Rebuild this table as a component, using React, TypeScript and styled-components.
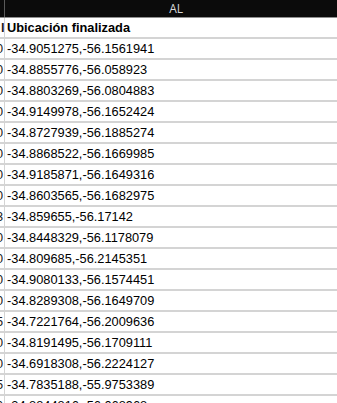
import React from "react";
import styled, { createGlobalStyle } from "styled-components";

const Global = createGlobalStyle`
  html, body { margin: 0; padding: 0; background: #ffffff; overflow: hidden; }
  body { font-family: "Liberation Sans", Arial, sans-serif; }
`;

const Sheet = styled.div`
  width: 337px;
  height: 403px;
  overflow: hidden;
  display: flex;
  flex-direction: column;
  background: #ffffff;
`;

const HeaderBar = styled.div`
  display: flex;
  flex: none;
  height: 17px;
  background: #0b0b0b;
  border-bottom: 1px solid #8f8f8f;
`;

const HeaderStub = styled.div`
  width: 4px;
  flex: none;
  border-right: 1px solid #5a5a5a;
`;

const HeaderLabel = styled.div`
  width: 342px;
  flex: none;
  display: flex;
  align-items: center;
  justify-content: center;
  color: #d8d8d8;
  font-family: "Open Sans", "Liberation Sans", sans-serif;
  font-size: 12px;
  letter-spacing: -0.3px;
  line-height: 17px;
`;

const Row = styled.div`
  display: flex;
  flex: none;
  height: 19px;
  border-bottom: 2px solid #d4d4d4;
`;

const StubCell = styled.div<{ $bold?: boolean }>`
  width: 5px;
  flex: none;
  overflow: hidden;
  white-space: nowrap;
  border-right: 1px solid #d4d4d4;
  display: flex;
  align-items: flex-end;
  padding-bottom: 2px;
  box-sizing: border-box;
  font-size: 12.8px;
  line-height: 15px;
  color: #1a1a1a;
  font-weight: ${(p) => (p.$bold ? 700 : 400)};
  text-indent: ${(p) => (p.$bold ? "1px" : "-4px")};
`;

const Cell = styled.div<{ $bold?: boolean }>`
  flex: none;
  width: 340px;
  padding-left: 2px;
  display: flex;
  align-items: flex-end;
  padding-bottom: 2px;
  box-sizing: border-box;
  white-space: nowrap;
  overflow: hidden;
  font-size: 12.8px;
  line-height: 15px;
  color: #000000;
  font-weight: ${(p) => (p.$bold ? 700 : 400)};
`;

const values = [
  "-34.9051275,-56.1561941",
  "-34.8855776,-56.058923",
  "-34.8803269,-56.0804883",
  "-34.9149978,-56.1652424",
  "-34.8727939,-56.1885274",
  "-34.8868522,-56.1669985",
  "-34.9185871,-56.1649316",
  "-34.8603565,-56.1682975",
  "-34.859655,-56.17142",
  "-34.8448329,-56.1178079",
  "-34.809685,-56.2145351",
  "-34.9080133,-56.1574451",
  "-34.8289308,-56.1649709",
  "-34.7221764,-56.2009636",
  "-34.8191495,-56.1709111",
  "-34.6918308,-56.2224127",
  "-34.7835188,-55.9753389",
  "-34.8844816,-56.068968",
];

const stubs = ["0", "0", "0", "0", "0", "0", "0", "0", "3", "0", "0", "0", "0", "5", "0", "0", "5", "0"];

export default function App() {
  return (
    <>
      <Global />
      <Sheet>
        <HeaderBar>
          <HeaderStub />
          <HeaderLabel>AL</HeaderLabel>
        </HeaderBar>
        <Row>
          <StubCell $bold>l</StubCell>
          <Cell $bold>Ubicación finalizada</Cell>
        </Row>
        {values.map((v, i) => (
          <Row key={i}>
            <StubCell>{stubs[i]}</StubCell>
            <Cell>{v}</Cell>
          </Row>
        ))}
      </Sheet>
    </>
  );
}
